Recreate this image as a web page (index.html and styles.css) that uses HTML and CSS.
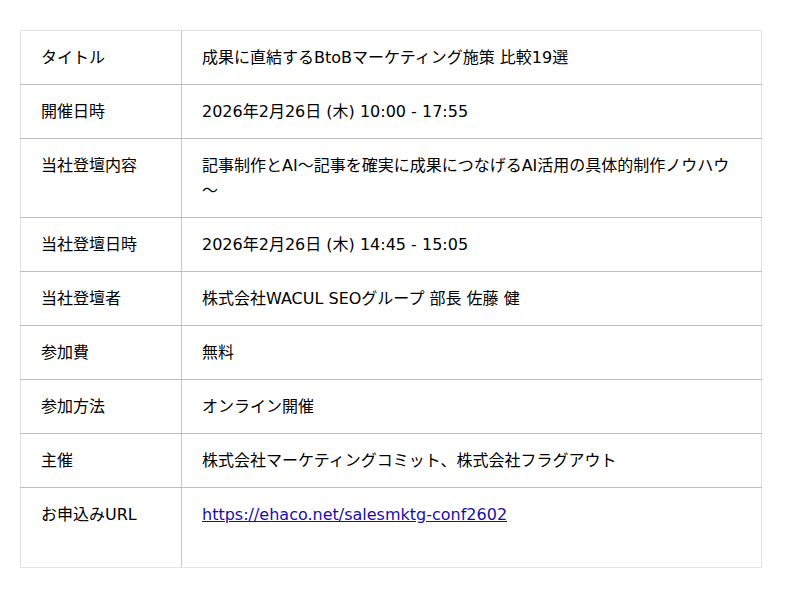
FILE: index.html
```html
<!DOCTYPE html>
<html lang="ja">
<head>
<meta charset="utf-8">
<link rel="stylesheet" href="styles.css">
</head>
<body>
<div class="page">
<table class="info">
<tbody>
<tr><th>タイトル</th><td>成果に直結するBtoBマーケティング施策 比較19選</td></tr>
<tr><th>開催日時</th><td>2026年2月26日 (木) 10:00 - 17:55</td></tr>
<tr><th>当社登壇内容</th><td>記事制作とAI～記事を確実に成果につなげるAI活用の具体的制作ノウハウ～</td></tr>
<tr><th>当社登壇日時</th><td>2026年2月26日 (木) 14:45 - 15:05</td></tr>
<tr><th>当社登壇者</th><td>株式会社WACUL SEOグループ 部長 佐藤 健</td></tr>
<tr><th>参加費</th><td>無料</td></tr>
<tr><th>参加方法</th><td>オンライン開催</td></tr>
<tr><th>主催</th><td>株式会社マーケティングコミット、株式会社フラグアウト</td></tr>
<tr class="last"><th>お申込みURL</th><td><a href="#">https://ehaco.net/salesmktg-conf2602</a><br>&nbsp;</td></tr>
</tbody>
</table>
</div>
</body>
</html>
```
FILE: styles.css
```css
html, body {
  margin: 0;
  padding: 0;
  background: #fff;
}
.page {
  padding: 30px 20px;
  font-family: "DejaVu Sans", "Noto Sans CJK JP", sans-serif;
  font-size: 16px;
  color: #000;
}
.info {
  width: 742px;
  border-collapse: collapse;
  border: 1px solid #e2e2e2;
}
.info th, .info td {
  text-align: left;
  vertical-align: top;
  font-weight: normal;
  line-height: 25px;
  padding: 14px 20px 14px 20px;
  border-bottom: 1px solid #bdbdbd;
}
.info th {
  width: 120px;
  border-right: 1px solid #c8c8c8;
}
.info tr.last th, .info tr.last td {
  border-bottom: 1px solid #e2e2e2;
  padding-bottom: 15px;
}
.info a {
  color: #1a0dab;
  text-decoration: underline;
}
```
